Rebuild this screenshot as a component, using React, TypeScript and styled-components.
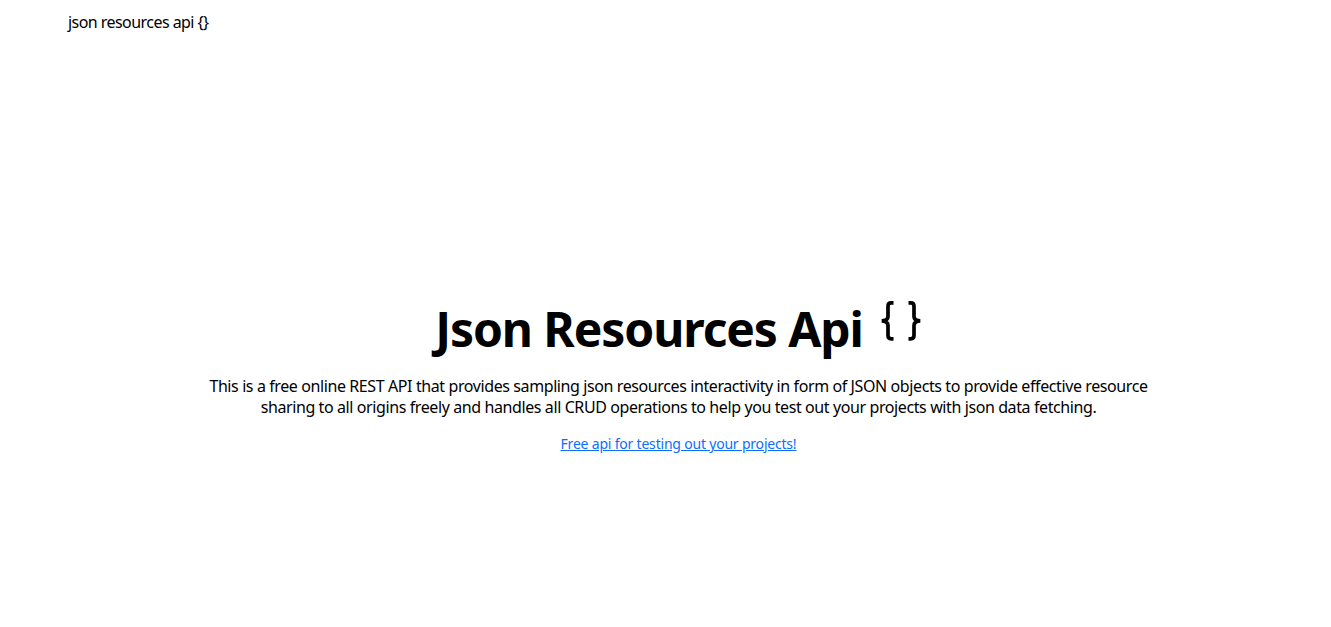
import styled, { createGlobalStyle } from "styled-components";

const GlobalStyle = createGlobalStyle`
  html, body {
    margin: 0;
    padding: 0;
    background: #ffffff;
    font-family: "Segoe UI", "Noto Sans", "Open Sans", sans-serif;
    color: #000000;
  }
`;

const Page = styled.div`
  min-height: 627px;
  display: flex;
  flex-direction: column;
`;

const Navbar = styled.nav`
  padding: 12px 68px 0;
  font-size: 16px;
  line-height: 21px;
  letter-spacing: -0.55px;
`;

const Hero = styled.main`
  flex: 1;
  display: flex;
  flex-direction: column;
  align-items: center;
  padding: 267px 0 0 26px;
  text-align: center;
`;

const Title = styled.h1`
  margin: 0 0 18px;
  font-size: 48px;
  font-weight: 700;
  line-height: 58px;
  letter-spacing: -1.1px;
  display: flex;
  align-items: flex-start;
  gap: 17px;
`;

const BracesIcon = styled.svg`
  width: 42px;
  height: 40px;
  margin-top: 1px;
  flex-shrink: 0;
`;

const Description = styled.p`
  margin: 0 0 16px;
  max-width: 960px;
  font-size: 16px;
  line-height: 21px;
  letter-spacing: -0.4px;
`;

const Link = styled.a`
  font-size: 14px;
  line-height: 20px;
  letter-spacing: -0.2px;
  color: #0d6efd;
  text-decoration: underline;
`;

function Braces() {
  return (
    <BracesIcon viewBox="0 0 42 40" fill="none" stroke="currentColor" strokeWidth={3.7}>
      <path d="M13.5 1.9H11.2Q8 1.9 8 5.2V15.4Q8 19.4 1.8 19.9Q8 20.4 8 24.4V34.6Q8 37.9 11.2 37.9H13.5" />
      <path d="M28.5 1.9H30.8Q34 1.9 34 5.2V15.4Q34 19.4 40.2 19.9Q34 20.4 34 24.4V34.6Q34 37.9 30.8 37.9H28.5" />
    </BracesIcon>
  );
}

export default function App() {
  return (
    <Page>
      <GlobalStyle />
      <Navbar>json resources api {"{}"}</Navbar>
      <Hero>
        <Title>
          Json Resources Api
          <Braces />
        </Title>
        <Description>
          This is a free online REST API that provides sampling json resources
          interactivity in form of JSON objects to provide effective resource
          sharing to all origins freely and handles all CRUD operations to help
          you test out your projects with json data fetching.
        </Description>
        <Link href="#">Free api for testing out your projects!</Link>
      </Hero>
    </Page>
  );
}
